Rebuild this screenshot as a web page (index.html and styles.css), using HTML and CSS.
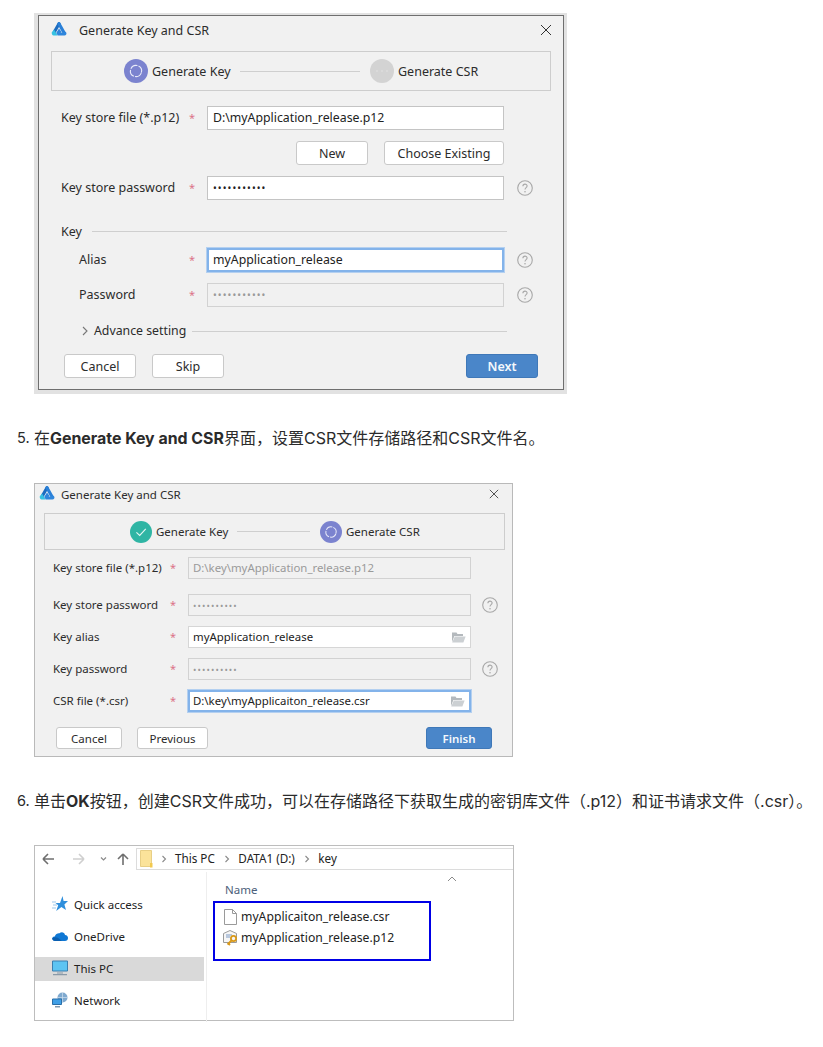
FILE: index.html
```html
<!DOCTYPE html>
<html lang="zh">
<head>
<meta charset="utf-8">
<title>Generate Key and CSR</title>
<link rel="stylesheet" href="styles.css">
</head>
<body>
<svg class="defs" width="0" height="0" aria-hidden="true">
  <symbol id="logo" viewBox="0 0 16 14">
    <path d="M8 1.8 3.2 10.2" fill="none" stroke="#1c6cc0" stroke-width="3.2" stroke-linecap="round"/>
    <path d="M8 1.8 12.8 10.2" fill="none" stroke="#2a80d8" stroke-width="3.2" stroke-linecap="round"/>
    <path d="M.8 10.4 3 7.6 6.6 13.6H2.6C1.4 13.6.4 11.6.8 10.4z" fill="#36c2e2"/>
    <path d="M8 6.4 5.2 11 6.8 13.6H13.4C15 13.6 16 11.6 15.2 10.4L14.6 9.8 12 10.6H9.6L10.4 9.8z" fill="#2f86dc"/>
  </symbol>
  <symbol id="spin" viewBox="0 0 24 24">
    <circle cx="12" cy="12" r="12" fill="#7b83cf"/>
    <circle cx="12" cy="12" r="5.6" fill="none" stroke="#e8eaf8" stroke-width="1.1" stroke-dasharray="7.6 1.2" transform="rotate(20 12 12)"/>
  </symbol>
  <symbol id="wait" viewBox="0 0 24 24">
    <circle cx="12" cy="12" r="12" fill="#d3d3d3"/>
    <circle cx="7" cy="12" r=".7" fill="#e6e6e6"/><circle cx="12" cy="12" r=".7" fill="#e6e6e6"/><circle cx="17" cy="12" r=".7" fill="#e6e6e6"/>
  </symbol>
  <symbol id="done" viewBox="0 0 24 24">
    <circle cx="12" cy="12" r="12" fill="#2fb5a4"/>
    <path d="M7 12.3 10.6 15.8 17.2 8.6" fill="none" stroke="#e6f7f4" stroke-width="1.2"/>
  </symbol>
  <symbol id="help" viewBox="0 0 16 16">
    <circle cx="8" cy="8" r="7.3" fill="none" stroke="#a8a8a8" stroke-width="1.1"/>
    <path d="M5.9 6.2C5.9 3.5 10.1 3.5 10.1 6.1 10.1 7.7 8 7.7 8 9.6" fill="none" stroke="#a8a8a8" stroke-width="1.1"/>
    <circle cx="8" cy="11.7" r=".8" fill="#a8a8a8"/>
  </symbol>
  <symbol id="close" viewBox="0 0 12 12">
    <path d="M1 1 11 11M11 1 1 11" stroke="#333" stroke-width="1" fill="none"/>
  </symbol>
  <symbol id="chev" viewBox="0 0 6 10">
    <path d="M1 1 5 5 1 9" stroke="#777" stroke-width="1.1" fill="none"/>
  </symbol>
  <symbol id="folder" viewBox="0 0 15 11">
    <path d="M1 .5H5.5L6.5 2H12V4H3.4L1 10z" fill="#b4b9bd"/>
    <path d="M1.2 10.5 3.8 4.6H14.6L12.4 10.5z" fill="#ccd0d3"/>
  </symbol>
  <symbol id="crumb" viewBox="0 0 6 8">
    <path d="M1.5 1 4.5 4 1.5 7" stroke="#8a8a8a" stroke-width="1.1" fill="none"/>
  </symbol>
</svg>

<section class="shot-one">
  <div class="win win-one">
    <div class="title title-one">
      <svg class="logo-one"><use href="#logo"/></svg>
      <span class="title-text">Generate Key and CSR</span>
      <svg class="close-icon"><use href="#close"/></svg>
    </div>
    <div class="steps steps-one">
      <svg class="dot"><use href="#spin"/></svg>
      <span class="step-name">Generate Key</span>
      <span class="step-line"></span>
      <svg class="dot"><use href="#wait"/></svg>
      <span class="step-name">Generate CSR</span>
    </div>

    <div class="row row-file">
      <span class="label">Key store file (*.p12)</span><span class="star">*</span>
      <div class="field">D:\myApplication_release.p12</div>
    </div>
    <div class="row row-actions">
      <button class="btn btn-new">New</button>
      <button class="btn btn-choose">Choose Existing</button>
    </div>
    <div class="row row-pass">
      <span class="label">Key store password</span><span class="star">*</span>
      <div class="field dots">•••••••••••</div>
      <svg class="help"><use href="#help"/></svg>
    </div>
    <div class="group group-key"><span>Key</span><i class="rule"></i></div>
    <div class="row row-alias">
      <span class="label sub">Alias</span><span class="star">*</span>
      <div class="field focus">myApplication_release</div>
      <svg class="help"><use href="#help"/></svg>
    </div>
    <div class="row row-pass2">
      <span class="label sub">Password</span><span class="star">*</span>
      <div class="field dots off">•••••••••••</div>
      <svg class="help"><use href="#help"/></svg>
    </div>
    <div class="group group-adv">
      <svg class="chev"><use href="#chev"/></svg>
      <span>Advance setting</span><i class="rule"></i>
    </div>
    <div class="row row-foot">
      <button class="btn btn-cancel">Cancel</button>
      <button class="btn btn-skip">Skip</button>
      <button class="btn primary btn-next">Next</button>
    </div>
  </div>
</section>

<p class="step-text step-five"><span class="num">5.</span><span>在<b>Generate Key and CSR</b>界面，设置CSR文件存储路径和CSR文件名。</span></p>

<section class="win win-two">
  <div class="title title-two">
    <svg class="logo-two"><use href="#logo"/></svg>
    <span class="title-text">Generate Key and CSR</span>
    <svg class="close-icon small"><use href="#close"/></svg>
  </div>
  <div class="steps steps-two">
    <svg class="dot"><use href="#done"/></svg>
    <span class="step-name">Generate Key</span>
    <span class="step-line"></span>
    <svg class="dot"><use href="#spin"/></svg>
    <span class="step-name">Generate CSR</span>
  </div>
  <div class="row r2 r2-file">
    <span class="label">Key store file (*.p12)</span><span class="star">*</span>
    <div class="field off">D:\key\myApplication_release.p12</div>
  </div>
  <div class="row r2 r2-pass">
    <span class="label">Key store password</span><span class="star">*</span>
    <div class="field dots off">••••••••••</div>
    <svg class="help"><use href="#help"/></svg>
  </div>
  <div class="row r2 r2-next">
    <span class="label">Key alias</span><span class="star">*</span>
    <div class="field plain">myApplication_release<svg class="folder"><use href="#folder"/></svg></div>
  </div>
  <div class="row r2 r2-next">
    <span class="label">Key password</span><span class="star">*</span>
    <div class="field dots off">••••••••••</div>
    <svg class="help"><use href="#help"/></svg>
  </div>
  <div class="row r2 r2-next">
    <span class="label">CSR file (*.csr)</span><span class="star">*</span>
    <div class="field focus plain">D:\key\myApplicaiton_release.csr<svg class="folder"><use href="#folder"/></svg></div>
  </div>
  <div class="row r2 r2-foot">
    <button class="btn btn-cancel2">Cancel</button>
    <button class="btn btn-prev">Previous</button>
    <button class="btn primary btn-finish">Finish</button>
  </div>
</section>

<p class="step-text step-six"><span class="num">6.</span><span>单击<b>OK</b>按钮，创建CSR文件成功，可以在存储路径下获取生成的密钥库文件（.p12）和证书请求文件（.csr）。</span></p>

<section class="explorer">
  <div class="navbar">
    <svg class="nav-icons" viewBox="0 0 96 16">
      <path d="M2 8H13M2 8 7 3M2 8 7 13" fill="none" stroke="#6f6f6f" stroke-width="1.6"/>
      <path d="M43 8H32M43 8 38 3M43 8 38 13" fill="none" stroke="#cfcfcf" stroke-width="1.6"/>
      <path d="M60 6.5 62.5 9 65 6.5" fill="none" stroke="#8a8a8a" stroke-width="1.2"/>
      <path d="M82 14V3M82 3 77 8M82 3 87 8" fill="none" stroke="#6f6f6f" stroke-width="1.6"/>
    </svg>
    <div class="address">
      <svg class="addr-folder" viewBox="0 0 13 18">
        <path d="M.5.5H11.5V16.5H.5z" fill="#fbe39a" stroke="#e8cf85"/>
        <path d="M10 13H12.5V17.5H10z" fill="#f2c94f"/>
      </svg>
      <svg class="crumb"><use href="#crumb"/></svg><span>This PC</span>
      <svg class="crumb"><use href="#crumb"/></svg><span>DATA1 (D:)</span>
      <svg class="crumb"><use href="#crumb"/></svg><span>key</span>
    </div>
  </div>
  <div class="panes">
    <nav class="side">
      <div class="side-item first">
        <svg class="side-icon" viewBox="0 0 16 16"><path d="M10.5 0 11.6 5H16L12.4 8.4 14 14 9.4 11 4.2 15 6.2 9.2 3.5 7H8z" fill="#2f8fdc"/><path d="M0 6H4M1 9H5M0 12H4" stroke="#9cc7ea" stroke-width="1"/></svg>
        <span>Quick access</span>
      </div>
      <div class="side-item">
        <svg class="side-icon wide" viewBox="0 0 16 11"><path d="M3.5 10.5C1 10.5 0 9 .3 7.6.6 6.3 1.8 5.8 2.8 5.9 3.6 3.5 5.6 2.4 7.5 2.7 9 1 12.6 1.4 13 4.4 15 4.6 16 6 16 7.4 16 9.2 14.8 10.5 13 10.5z" fill="#0f78d4"/><path d="M3.5 10.5C1 10.5 0 9 .3 7.6 3 6 6 7 7.8 8.8L10 10.5z" fill="#0a5fb0"/></svg>
        <span>OneDrive</span>
      </div>
      <div class="side-item active">
        <svg class="side-icon wide" viewBox="0 0 16 15"><path d="M.5.5H15.5V10.5H.5z" fill="#5cc4f2" stroke="#3a7fb0"/><path d="M5 12.5H11M1 14.2H15" stroke="#8a9aa8" stroke-width="1.2"/></svg>
        <span>This PC</span>
      </div>
      <div class="side-item">
        <svg class="side-icon wide" viewBox="0 0 16 15"><circle cx="10.5" cy="5" r="5" fill="#7fa9cf"/><path d="M10.5 0V10M5.5 5H15.5" stroke="#cfe0ee" stroke-width=".7"/><path d="M.5 6.5H9.5V12H.5z" fill="#3f9fe6" stroke="#2a6fa8"/><path d="M3 14.3H8" stroke="#5f7f9a" stroke-width="1.2"/></svg>
        <span>Network</span>
      </div>
    </nav>
    <div class="files">
      <div class="sort"><svg viewBox="0 0 10 6"><path d="M1 5 5 1 9 5" fill="none" stroke="#8a8a8a" stroke-width="1"/></svg></div>
      <div class="name-head">Name</div>
      <div class="mark">
        <div class="file">
          <svg class="file-icon" viewBox="0 0 13 16"><path d="M.5.5H8.5L12.5 4.5V15.5H.5zM8.5.5V4.5H12.5" fill="#fff" stroke="#9a9a9a"/></svg>
          <span>myApplicaiton_release.csr</span>
        </div>
        <div class="file">
          <svg class="file-icon" viewBox="0 0 15 16"><path d="M.5 3.5 7 .5 13.5 3.5V12.5H.5z" fill="#f6f6f6" stroke="#9a9a9a"/><path d="M3 5H9M3 7H7" stroke="#7d9ac4"/><circle cx="10.5" cy="8.5" r="2.6" fill="none" stroke="#d9991a" stroke-width="1.8"/><path d="M8.6 10.4 4.5 14.5M5.5 13.5 7 15" stroke="#d9991a" stroke-width="1.8"/></svg>
          <span>myApplication_release.p12</span>
        </div>
      </div>
    </div>
  </div>
</section>
</body>
</html>
```

FILE: styles.css
```css
* { box-sizing: border-box; }
html, body { margin: 0; padding: 0; }
body {
  width: 823px;
  height: 1047px;
  overflow: hidden;
  background: #fff;
  color: #333;
  font-family: "Noto Sans", "Noto Sans CJK SC", sans-serif;
}
.defs { display: block; height: 0; }

/* article text */
.step-text {
  display: flex;
  margin: 32px 0 33px;
  padding-left: 17px;
  height: 24px;
  font-family: Inter, "Noto Sans CJK SC", sans-serif;
  font-size: 16px;
  line-height: 24px;
  color: #2b2b2b;
  white-space: nowrap;
}
.step-text .num { width: 17px; font-size: 14.5px; }
.step-text b { font-weight: 700; font-size: 15.9px; }
.step-six { margin-bottom: 32px; margin-top: 32px; }

/* shared window parts */
.shot-one {
  width: 533px;
  height: 381px;
  margin: 13px 0 0 34px;
  padding: 2px 3px 4px 4px;
  background: #e2e2e2;
}
.win { background: #f1f1f1; color: #2c2c2c; }
.win-one {
  width: 526px;
  height: 375px;
  border: 1px solid #6f6f6f;
  font-size: 12.5px;
}
.title { display: flex; align-items: center; }
.title-text { flex: 1; white-space: nowrap; }
.title-one { height: 28px; padding: 0 11px 0 12px; margin-bottom: 7px; font-size: 12.5px; }
.logo-one { width: 16px; height: 14px; margin: -2px 12px 0 0; }
.close-icon { width: 12px; height: 12px; }
.steps {
  display: flex;
  align-items: center;
  border: 1px solid #cdcdcd;
}
.steps-one { width: 500px; height: 40px; margin-left: 12px; padding-left: 72px; }
.dot { flex: none; }
.step-name { flex: none; white-space: nowrap; }
.steps-two .step-name { padding-bottom: 1px; }
.steps-one .dot { width: 24px; height: 24px; }
.steps-one .step-name { width: 78px; margin-left: 4px; }
.steps-one .step-line { width: 120px; margin: 0 10px; }
.step-line { flex: none; height: 1px; background: #cfcfcf; margin-top: -1px; }

.row { display: flex; align-items: center; }
.label { flex: none; padding-bottom: 2px; white-space: nowrap; }
.star { flex: none; color: #dc7388; font-size: 11px; padding-bottom: 2px; }
.field {
  display: flex;
  align-items: center;
  padding-bottom: 2px;
  background: #fff;
  border: 1px solid #c4c4c4;
  color: #222;
  font-size: 12.3px;
  white-space: nowrap;
}
.field.off { background: #f1f1f1; border-color: #d2d2d2; color: #9a9a9a; }
.field.focus {
  border: 2px solid #83b3ea;
  box-shadow: 0 0 0 1px #b4d0f0;
}
.field.dots { letter-spacing: 1.1px; padding-bottom: 0; }

.win-one .row { height: 24px; padding-left: 22px; }
.win-one .label { width: 128px; }
.win-one .label.sub { padding-left: 18px; }
.win-one .star { width: 18px; }
.win-one .field { width: 297px; height: 24px; padding-left: 5px; }
.win-one .field.focus { padding-left: 4px; }
.win-one .field.dots { font-size: 10px; }
.win-one .help { width: 16px; height: 16px; margin-left: 13px; }

.row-file { margin-top: 15px; }
.row-actions, .row-pass, .row-pass2 { margin-top: 11px; }
.win-one .row-actions { padding-left: 257px; }
.row-alias { margin-top: 9px; }
.row-foot { margin-top: 15px; }
.win-one .row-foot { padding: 0 25px; }

.btn {
  height: 24px;
  padding: 0;
  background: #fff;
  border: 1px solid #c9c9c9;
  border-radius: 3px;
  color: #2c2c2c;
  font: inherit;
}
.btn.primary {
  background: #4a86c9;
  border-color: #3f78b8;
  color: #f4f8fc;
  font-weight: 600;
}
.btn-new { width: 72px; }
.btn-choose { width: 120px; margin-left: 16px; }
.btn-cancel { width: 72px; }
.btn-skip { width: 72px; margin-left: 16px; }
.btn-next { width: 72px; margin-left: auto; }

.group { display: flex; align-items: center; height: 16px; }
.group span { white-space: nowrap; }
.group .rule { flex: 1; height: 1px; background: #cfcfcf; }
.group-key { margin: 23px 56px 0 22px; }
.group-key .rule { margin-left: 10px; }
.group-adv { margin: 16px 56px 0 43px; }
.group-adv span { font-size: 12.3px; padding-bottom: 2px; }
.group-adv .chev { width: 6px; height: 10px; margin-right: 6px; }
.group-adv .rule { margin-left: 6px; }

/* second dialog */
.win-two {
  width: 479px;
  height: 274px;
  margin-left: 34px;
  border: 1px solid #b9b9b9;
  font-size: 11.5px;
}
.title-two { height: 20px; margin-bottom: 9px; padding: 0 13px 0 4px; font-size: 11.5px; }
.logo-two { width: 16px; height: 14px; margin: -2px 6px 0 0; }
.close-icon.small { width: 10px; height: 10px; }
.steps-two { width: 461px; height: 37px; margin-left: 9px; padding-left: 85px; }
.steps-two .dot { width: 22px; height: 22px; }
.steps-two .step-name { width: 73px; margin-left: 4px; }
.steps-two .step-line { width: 73px; margin: 0 10px 0 8px; }
.r2 { height: 22px; padding-left: 18px; }
.r2 .label { width: 117px; }
.r2 .star { width: 18px; }
.r2 .field { width: 283px; height: 22px; padding-left: 4px; font-size: 11.4px; }
.r2 .field.plain { justify-content: space-between; padding-right: 4px; border-color: #d6d6d6; }
.r2 .field.focus { border-color: #83b3ea; padding-left: 3px; }
.r2 .field.dots { font-size: 9px; }
.r2 .help { width: 16px; height: 16px; margin-left: 11px; }
.r2-file { margin-top: 7px; }
.r2-pass { margin-top: 15px; }
.r2-next { margin-top: 10px; }
.r2-foot { margin-top: 15px; padding: 0 20px 0 21px; }
.folder { width: 15px; height: 11px; margin-top: 2px; }
.btn-cancel2 { width: 66px; height: 22px; }
.btn-prev { width: 71px; height: 22px; margin-left: 15px; }
.btn-finish { width: 66px; height: 22px; margin-left: auto; }

/* explorer */
.explorer {
  width: 480px;
  height: 176px;
  margin-left: 34px;
  border: 1px solid #bdbdbd;
  font-size: 11.5px;
  color: #222;
}
.navbar { display: flex; align-items: center; height: 22px; margin-top: 2px; margin-bottom: 2px; }
.nav-icons { width: 96px; height: 16px; margin-left: 6px; }
.address {
  display: flex;
  align-items: center;
  flex: 1;
  height: 22px;
  margin-left: -1px;
  padding-left: 3px;
  border: 1px solid #dcdcdc;
  border-right: 0;
  font-size: 11.7px;
}
.addr-folder { width: 13px; height: 18px; margin-right: 8px; }
.crumb { width: 6px; height: 8px; margin-right: 8px; }
.address span { margin-right: 9.5px; padding-bottom: 2px; }
.panes { display: flex; height: 150px; }
.side { width: 171px; flex: none; padding-top: 18px; }
.side-item {
  display: flex;
  align-items: center;
  width: 169px;
  height: 24px;
  margin-bottom: 8px;
  padding: 0 0 2px 17px;
}
.side-item.first { margin-top: 3px; }
.side-item.active { background: #d9d9d9; }
.side-icon { width: 16px; height: 16px; margin: 0 6px 0 0; flex: none; }
.files { flex: 1; border-left: 1px solid #eee; padding-left: 6px; position: relative; }
.sort { position: absolute; left: 240px; top: 4px; width: 10px; height: 6px; }
.sort svg { display: block; width: 10px; height: 6px; }
.name-head { height: 29px; line-height: 24px; padding: 6px 0 0 12px; color: #4c607a; }
.mark {
  width: 218px;
  height: 60px;
  padding: 3px 0 0 8px;
  border: 2px solid #0000e6;
  font-size: 12.2px;
}
.file { display: flex; align-items: center; height: 21px; }
.file-icon { width: 15px; height: 16px; margin-right: 3px; flex: none; }
```
